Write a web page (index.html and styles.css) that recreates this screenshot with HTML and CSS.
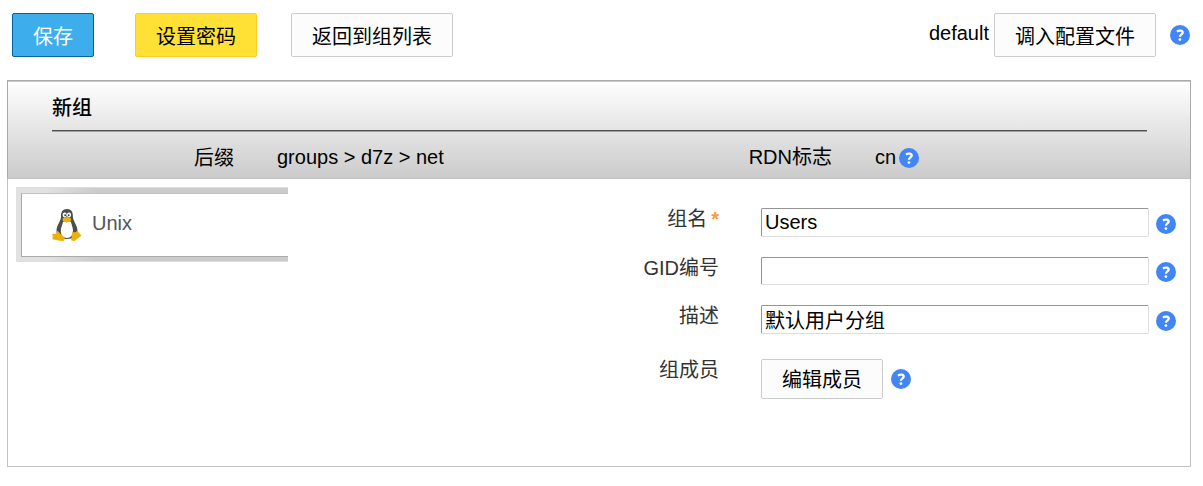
FILE: index.html
```html
<!DOCTYPE html>
<html lang="zh-CN">
<head>
<meta charset="utf-8">
<title>新组</title>
<link rel="stylesheet" href="styles.css">
</head>
<body>
<svg class="defs" aria-hidden="true">
  <symbol id="help" viewBox="0 0 20 20">
    <circle cx="10" cy="10" r="10" fill="#4285f4"/>
    <path d="M6.9 6.4C8.8 5.4 12.7 5.1 12.7 7.5C12.7 9.3 9.9 9.4 9.9 11.8" fill="none" stroke="#fff" stroke-width="2.3"/>
    <circle cx="9.9" cy="14.6" r="1.4" fill="#fff"/>
  </symbol>
</svg>
<header class="toolbar">
  <button class="btn primary">保存</button>
  <button class="btn warning">设置密码</button>
  <button class="btn">返回到组列表</button>
  <div class="profile">
    <span class="profile-name">default</span>
    <button class="btn">调入配置文件</button>
    <svg class="help"><use href="#help"/></svg>
  </div>
</header>
<main class="panel">
  <section class="panel-head">
    <h1 class="title">新组</h1>
    <div class="meta">
      <span class="suffix-label">后缀</span>
      <span class="suffix-value">groups &gt; d7z &gt; net</span>
      <span class="rdn-label">RDN标志</span>
      <span class="rdn-value">cn</span>
      <svg class="help"><use href="#help"/></svg>
    </div>
  </section>
  <section class="content">
    <nav class="tab-frame">
      <div class="tab">
        <svg class="tux" viewBox="0 0 30 34">
          <path d="M15 1C10.5 1 8.8 4 9 8.5C9.1 13 4.5 17 4.5 23C4.5 28.5 9 31 15 31C21 31 25.5 28 25.5 23C25.5 17 20.8 13 20.9 8.5C21 4 19.4 1 15 1Z" fill="#4d4d4d"/>
          <path d="M11 14C12.4 12.8 17.6 12.8 19 14C19.5 17 21 19 21 23C21 27 18.8 30 15 30C11 30 8.8 27 8.8 23C8.8 19 10.5 17 11 14Z" fill="#fff"/>
          <ellipse cx="12.7" cy="7" rx="2.1" ry="2.4" fill="#fff"/>
          <ellipse cx="17" cy="7" rx="2.1" ry="2.4" fill="#fff"/>
          <circle cx="13.1" cy="7.2" r="1" fill="#4d4d4d"/>
          <circle cx="16.7" cy="7.2" r="1" fill="#4d4d4d"/>
          <path d="M11.5 12.3L14.5 14.8L18.3 12.3Z" fill="#f77b00"/>
          <ellipse cx="14.8" cy="11.6" rx="4.3" ry="2.5" fill="#eab20a"/>
          <path d="M5.5 22.8L9.5 27L12.9 30.5L11.5 33L7.8 32.7L0.3 31.2L0.8 28.8L0.2 26L4 25.7Z" fill="#eab20a"/>
          <path d="M20.2 23.6C21.5 24.8 24 24.6 25.3 22.4L29.4 27.8L22.5 33L19.2 32.6Z" fill="#eab20a"/>
        </svg>
        <span class="tab-name">Unix</span>
      </div>
    </nav>
    <form class="fields">
      <label class="label">组名<b class="required">*</b></label>
      <div class="control"><input class="input" type="text" value="Users"><svg class="help"><use href="#help"/></svg></div>
      <label class="label">GID编号</label>
      <div class="control"><input class="input short" type="text"><svg class="help"><use href="#help"/></svg></div>
      <label class="label">描述</label>
      <div class="control"><input class="input" type="text" value="默认用户分组"><svg class="help"><use href="#help"/></svg></div>
      <label class="label members">组成员</label>
      <div class="control members-control"><button type="button" class="btn edit">编辑成员</button><svg class="help"><use href="#help"/></svg></div>
    </form>
  </section>
</main>
</body>
</html>
```

FILE: styles.css
```css
* { box-sizing: border-box; }
body {
  margin: 0;
  background: #fff;
  color: #000;
  font: 20px/24px "Liberation Sans", "Noto Sans CJK SC", sans-serif;
}
.defs { display: none; }
.help { display: block; flex: none; width: 20px; height: 20px; }
.toolbar { display: flex; height: 80px; padding: 13px 13px 0 12px; }
.btn {
  flex: none;
  height: 44px;
  padding: 3px 20px 0;
  border: 1px solid #ccc;
  border-radius: 2px;
  background: #fcfcfc;
  color: #000;
  font: inherit;
  white-space: nowrap;
}
.primary { margin-right: 41px; border-color: #00639a; background: #3daeeb; color: #fff; }
.warning { margin-right: 34px; border-color: #fdcf25; background: #ffe135; }
.profile { display: flex; margin-left: auto; }
.profile-name { margin: 8px 5px 0 0; }
.profile .help { margin: 12px 0 0 14px; }
.panel { width: 1184px; height: 387px; margin-left: 7px; border: 1px solid #c3c3c3; border-top: 0; }
.panel-head {
  height: 99px;
  margin: 0 -1px;
  padding: 0 43px 0 44px;
  border: 1px solid #aaa;
  border-bottom-color: #c1c1c1;
  background: linear-gradient(#fff, #cbcbcb);
  box-shadow: inset 0 1px #c8c8c8;
}
.title {
  height: 50px;
  margin: 0;
  padding-top: 15px;
  border-bottom: 1px solid #505050;
  box-shadow: 0 1px #a0a0a0;
  font-size: 20px;
  font-weight: 500;
}
.meta { display: flex; padding-top: 14px; }
.suffix-label { width: 182px; padding-top: 1px; text-align: right; }
.suffix-value { width: 471px; padding-left: 43px; }
.rdn-label { width: 127px; text-align: right; }
.rdn-value { padding-left: 43px; }
.meta .help { margin: 3px 0 0 3px; }
.content { display: flex; }
.tab-frame {
  width: 272px;
  height: 75px;
  margin: 8px 0 0 8px;
  padding: 6px 0 5px 5px;
  background: linear-gradient(90deg, #e1e1e1 30px, #cbcbcb 80px);
  box-shadow: inset 0 1px #ddd, inset 0 -1px #ddd;
}
.tab {
  display: flex;
  height: 64px;
  padding: 14px 0 0 30px;
  border: 1px solid #aaa;
  border-top-color: #c3c3c3;
  border-right: 0;
  background: #fff;
}
.tux { width: 30px; height: 34px; }
.tab-name { margin: 3px 0 0 10px; color: #555; }
.fields { display: grid; grid-template-columns: 300px 415px; column-gap: 42px; grid-template-rows: 49px 48px 54px 40px; margin: 29px 0 0 131px; }
.label { height: 24px; margin-top: -1px; color: #333; text-align: right; }
.required { margin-left: 4px; color: #ff9933; }
.control { display: flex; }
.input {
  width: 388px;
  height: 29px;
  padding: 0 3px;
  border: 1px solid #ddd;
  border-top-color: #949494;
  border-left-color: #949494;
  border-radius: 2px;
  background: #fff;
  font: inherit;
  outline: none;
}
.short { height: 28px; }
.control .help { margin: 6px 0 0 7px; }
.control .short + .help { margin-top: 5px; }
.edit { height: 40px; padding-top: 2px; }
.members { margin-top: -1px; }
.control.members-control .help { margin: 10px 0 0 8px; }
```
